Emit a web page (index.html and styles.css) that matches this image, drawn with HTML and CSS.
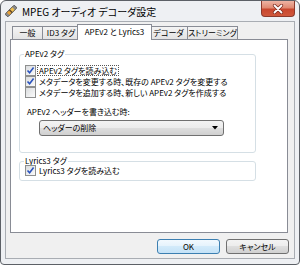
FILE: index.html
```html
<!DOCTYPE html>
<html lang="ja">
<head>
<meta charset="utf-8">
<title>MPEG オーディオ デコーダ設定</title>
<link rel="stylesheet" href="styles.css">
</head>
<body>
<div class="window">
  <div class="titlebar">
    <svg class="app-icon" width="12" height="12" viewBox="0 0 12 12">
      <g transform="rotate(-45 6 6)">
        <rect x="-0.5" y="4" width="13" height="4" rx="1" fill="#8a8a8a"/>
        <rect x="2" y="4" width="3" height="4" fill="#e8a23a"/>
        <rect x="5" y="4" width="1.5" height="4" fill="#6b4a1e"/>
        <rect x="6.5" y="4" width="3" height="4" fill="#f0c050"/>
        <rect x="-0.5" y="4" width="13" height="4" rx="1" fill="none" stroke="#4a4a4a" stroke-width="0.8"/>
      </g>
    </svg>
    <span class="title">MPEG オーディオ デコーダ設定</span>
    <div class="close-btn">
      <svg width="12" height="10" viewBox="0 0 12 10">
        <path d="M2.5 1.5 L9.5 8.5 M9.5 1.5 L2.5 8.5" stroke="#7a2a1e" stroke-width="3.2" stroke-linecap="round"/>
        <path d="M2.5 1.5 L9.5 8.5 M9.5 1.5 L2.5 8.5" stroke="#ffffff" stroke-width="1.8" stroke-linecap="round"/>
      </svg>
    </div>
  </div>
  <div class="client">
    <div class="tabs">
      <div class="tab tab-general">一般</div>
      <div class="tab tab-id3">ID3 タグ</div>
      <div class="tab tab-ape selected">APEv2 と Lyrics3</div>
      <div class="tab tab-decoder">デコーダ</div>
      <div class="tab tab-stream">ストリーミング</div>
    </div>
    <div class="panel">
      <div class="group group-ape">
        <div class="group-title">APEv2 タグ</div>
        <div class="check-row first">
          <span class="box checked"><svg width="9" height="9" viewBox="0 0 9 9"><path d="M1.5 4.5 L3.6 6.8 L7.6 1.6" fill="none" stroke="#2a52be" stroke-width="1.6"/></svg></span>
          <span class="check-text focus">APEv2 タグを読み込む</span>
        </div>
        <div class="check-row">
          <span class="box checked"><svg width="9" height="9" viewBox="0 0 9 9"><path d="M1.5 4.5 L3.6 6.8 L7.6 1.6" fill="none" stroke="#2a52be" stroke-width="1.6"/></svg></span>
          <span class="check-text">メタデータを変更する時、既存の APEv2 タグを変更する</span>
        </div>
        <div class="check-row">
          <span class="box"></span>
          <span class="check-text">メタデータを追加する時、新しい APEv2 タグを作成する</span>
        </div>
        <div class="field-label">APEv2 ヘッダーを書き込む時:</div>
        <div class="select">
          <span class="select-text">ヘッダーの削除</span>
          <svg class="select-arrow" width="6" height="4" viewBox="0 0 6 4"><path d="M0 0 H6 L3 3.5 Z" fill="#000"/></svg>
        </div>
      </div>
      <div class="group group-lyrics">
        <div class="group-title">Lyrics3 タグ</div>
        <div class="check-row first">
          <span class="box checked"><svg width="9" height="9" viewBox="0 0 9 9"><path d="M1.5 4.5 L3.6 6.8 L7.6 1.6" fill="none" stroke="#2a52be" stroke-width="1.6"/></svg></span>
          <span class="check-text">Lyrics3 タグを読み込む</span>
        </div>
      </div>
    </div>
    <div class="buttons">
      <div class="btn btn-default">OK</div>
      <div class="btn">キャンセル</div>
    </div>
  </div>
</div>
</body>
</html>
```

FILE: styles.css
```css
* { box-sizing: border-box; }
html, body { margin: 0; padding: 0; }
body {
  width: 300px;
  height: 265px;
  background: #ffffff;
  font-family: "Noto Sans CJK JP", "Noto Sans", sans-serif;
  font-size: 8px;
  color: #000;
  font-feature-settings: "palt";
  overflow: hidden;
}
.window {
  width: 300px;
  height: 265px;
  border: 1px solid #5c6066;
  border-radius: 6px 6px 4px 4px;
  background: #eef0f3;
  padding: 0 4px 5px 4px;
  display: flex;
  flex-direction: column;
}
.titlebar {
  height: 20px;
  display: flex;
  align-items: center;
  flex: none;
}
.app-icon { flex: none; }
.title {
  margin-left: 5px;
  font-size: 10px;
  color: #000;
  line-height: 12px;
  margin-top: 1px;
}
.close-btn {
  margin-left: auto;
  align-self: flex-start;
  width: 34px;
  height: 16px;
  border: 1px solid #8c3a2c;
  border-top: none;
  border-radius: 0 0 4px 4px;
  background: linear-gradient(#eeb4a4 0%, #e08a72 45%, #c9472e 55%, #d0583c 100%);
  display: flex;
  align-items: center;
  justify-content: center;
}
.close-btn svg { display: block; }
.client {
  height: 238px;
  border: 1px solid #a9adb3;
  background: #f0f0f0;
  padding: 2px 4px 0 4px;
  display: flex;
  flex-direction: column;
}
.tabs {
  display: flex;
  height: 16px;
  padding-left: 2px;
  flex: none;
}
.tab {
  height: 13px;
  margin-top: 2px;
  margin-left: -1px;
  border: 1px solid #898c95;
  border-bottom: none;
  background: linear-gradient(#f4f4f4, #e3e3e3);
  text-align: center;
  line-height: 12px;
  white-space: nowrap;
  flex: none;
}
.tab-general { width: 31px; margin-left: 0; }
.tab-id3 { width: 38px; }
.tab-ape { width: 75px; }
.tab-decoder { width: 39px; }
.tab-stream { width: 51px; }
.tab.selected {
  height: 16px;
  margin-top: 0;
  margin-left: -3px;
  margin-right: -2px;
  background: #ffffff;
  position: relative;
  z-index: 2;
  line-height: 14px;
}
.panel {
  margin-top: -1px;
  height: 194px;
  width: 278px;
  background: #ffffff;
  border: 1px solid #898c95;
  position: relative;
  z-index: 1;
  padding: 14px 0 0 8px;
  flex: none;
}
.group {
  width: 237px;
  border: 1px solid #d5dfe5;
  border-radius: 3px;
  padding: 0 0 0 5px;
}
.group-title {
  width: fit-content;
  margin: -6px 0 0 -1px;
  padding: 0 1px;
  height: 10px;
  line-height: 10px;
  background: #ffffff;
}
.group-ape { padding-bottom: 16px; }
.group-lyrics { margin-top: 8px; padding-bottom: 4px; }
.check-row {
  display: flex;
  align-items: center;
  height: 11px;
}
.group-ape .check-row.first { margin-top: 6px; }
.group-lyrics .check-row.first { margin-top: -1px; }
.box {
  width: 11px;
  height: 11px;
  border: 1px solid #8e8f8f;
  background: linear-gradient(135deg, #dadcde, #fbfbfb);
  flex: none;
  display: flex;
  align-items: center;
  justify-content: center;
}
.box svg { display: block; }
.check-text {
  margin-left: 1px;
  line-height: 9px;
  padding: 0 1px;
  white-space: nowrap;
  border: 1px solid transparent;
}
.check-text.focus { border: 1px dotted #555; }
.field-label {
  margin-top: 9px;
  margin-left: 2px;
  line-height: 10px;
}
.select {
  margin-top: 3px;
  margin-left: 14px;
  width: 185px;
  height: 16px;
  border: 1px solid #707070;
  border-radius: 3px;
  background: linear-gradient(#f3f3f3 0%, #ececec 50%, #dedede 50%, #d0d0d0 100%);
  display: flex;
  align-items: center;
  padding: 0 5px 0 3px;
}
.select-text { flex: 1; line-height: 10px; }
.select-arrow { display: block; }
.buttons {
  display: flex;
  justify-content: flex-end;
  gap: 6px;
  margin-top: 6px;
  padding-right: 1px;
  flex: none;
}
.btn {
  width: 63px;
  height: 15px;
  border: 1px solid #707070;
  border-radius: 3px;
  background: linear-gradient(#f3f3f3 0%, #ececec 50%, #dedede 50%, #d0d0d0 100%);
  text-align: center;
  line-height: 13px;
}
.btn-default {
  border-color: #3c7fb1;
  background: linear-gradient(#f2f9fe 0%, #e4f2fc 50%, #d2eafa 50%, #c4e2f7 100%);
}
```
